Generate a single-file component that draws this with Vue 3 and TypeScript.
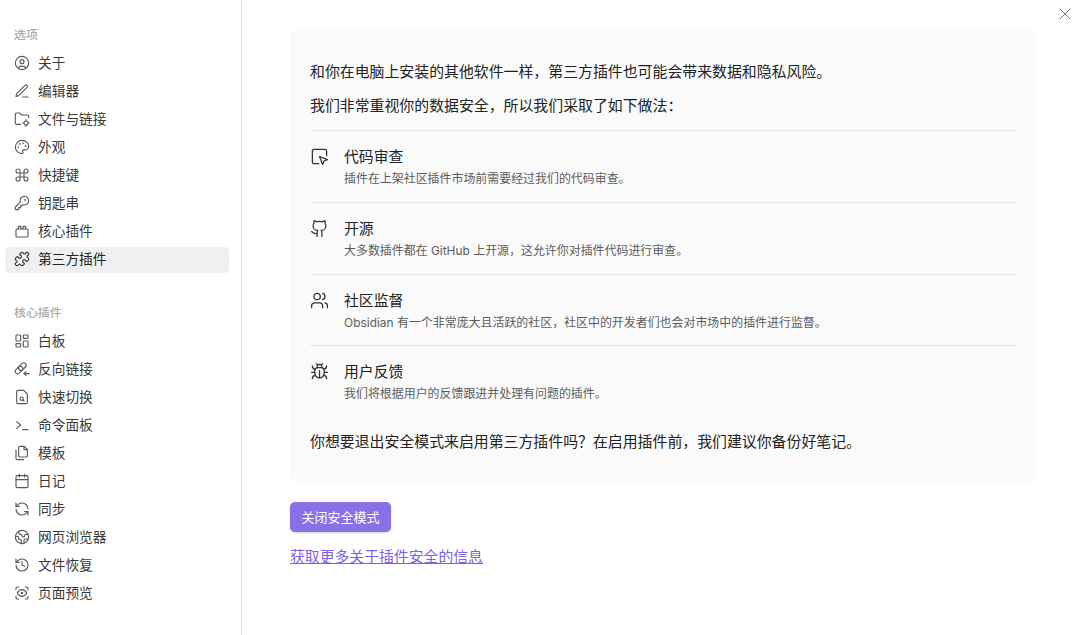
<script setup lang="ts">
interface NavItem { label: string; icon: string; active?: boolean }
interface NavSection { title: string; items: NavItem[] }
interface Measure { title: string; desc: string; icon: string }

const p = (d: string) => `<path d="${d}"/>`
const c = (x: number, y: number, r: number) => `<circle cx="${x}" cy="${y}" r="${r}"/>`
const r = (x: number, y: number, w: number, h: number, rx = 1) => `<rect x="${x}" y="${y}" width="${w}" height="${h}" rx="${rx}"/>`
const link = (cx: number, cy: number) => `<rect x="${cx - 6.5}" y="${cy - 3.6}" width="13" height="7.2" rx="3.6" transform="rotate(-45 ${cx} ${cy})"/>`

const sections: NavSection[] = [
  {
    title: '选项',
    items: [
      { label: '关于', icon: c(12, 12, 10) + c(12, 10, 3) + p('M7 20.662V19a2 2 0 0 1 2-2h6a2 2 0 0 1 2 2v1.662') },
      { label: '编辑器', icon: p('M13 21h8') + p('M16.5 3.5a2.12 2.12 0 0 1 3 3L7 19l-4 1 1-4Z') },
      { label: '文件与链接', icon: p('M10 20H4a2 2 0 0 1-2-2V5a2 2 0 0 1 2-2h3.93a2 2 0 0 1 1.66.9l.82 1.2a2 2 0 0 0 1.66.9H20a2 2 0 0 1 2 2v2') + c(18, 18, 3) + p('M18 13v1.5M18 21.5V23M13 18h1.5M21.5 18H23') },
      { label: '外观', icon: c(13.5, 6.5, 0.5) + c(17.5, 10.5, 0.5) + c(8.5, 7.5, 0.5) + c(6.5, 12.5, 0.5) + p('M12 2C6.5 2 2 6.5 2 12s4.5 10 10 10c.926 0 1.648-.746 1.648-1.688 0-.437-.18-.835-.437-1.125-.29-.289-.438-.652-.438-1.125a1.64 1.64 0 0 1 1.668-1.668h1.996c3.051 0 5.555-2.503 5.555-5.554C21.965 6.012 17.461 2 12 2z') },
      { label: '快捷键', icon: p('M15 6v12a3 3 0 1 0 3-3H6a3 3 0 1 0 3 3V6a3 3 0 1 0-3 3h12a3 3 0 1 0-3-3') },
      { label: '钥匙串', icon: p('M2 18v3c0 .6.4 1 1 1h4v-3h3v-3h2l1.4-1.4a6.5 6.5 0 1 0-4-4Z') + c(16.5, 7.5, 0.5) },
      { label: '核心插件', icon: r(3, 9, 18, 12, 1.5) + p('M6.5 9V6a1 1 0 0 1 1-1h2a1 1 0 0 1 1 1v3M13.5 9V6a1 1 0 0 1 1-1h2a1 1 0 0 1 1 1v3') },
      { label: '第三方插件', active: true, icon: p('M19.439 7.85c-.049.322.059.648.289.878l1.568 1.568c.47.47.706 1.087.706 1.704s-.235 1.233-.706 1.704l-1.611 1.611a.98.98 0 0 1-.837.276c-.47-.07-.802-.48-.968-.925a2.501 2.501 0 1 0-3.214 3.214c.446.166.855.497.925.968a.979.979 0 0 1-.276.837l-1.61 1.61a2.404 2.404 0 0 1-1.705.707 2.402 2.402 0 0 1-1.704-.706l-1.568-1.568a1.026 1.026 0 0 0-.877-.29c-.493.074-.84.504-1.02.968a2.5 2.5 0 1 1-3.237-3.237c.464-.18.894-.527.967-1.02a1.026 1.026 0 0 0-.289-.877l-1.568-1.568A2.402 2.402 0 0 1 1.998 12c0-.617.236-1.234.706-1.704L4.23 8.77c.24-.24.581-.353.917-.303.515.077.877.528 1.073 1.01a2.5 2.5 0 1 0 3.259-3.259c-.482-.196-.933-.558-1.01-1.073-.05-.336.062-.676.303-.917l1.525-1.525A2.402 2.402 0 0 1 12 1.998c.617 0 1.234.236 1.704.706l1.568 1.568c.23.23.556.338.877.29.493-.074.84-.504 1.02-.968a2.5 2.5 0 1 1 3.237 3.237c-.464.18-.894.527-.967 1.02Z') },
    ],
  },
  {
    title: '核心插件',
    items: [
      { label: '白板', icon: r(3, 3, 7, 9) + r(14, 3, 7, 5) + r(14, 12, 7, 9) + r(3, 16, 7, 5) },
      { label: '反向链接', icon: link(7.5, 13.5) + link(12.5, 8.5) + p('M23 19h-8') + p('M18 16l-3 3 3 3') },
      { label: '快速切换', icon: p('M14.5 2H6a2 2 0 0 0-2 2v16a2 2 0 0 0 2 2h12a2 2 0 0 0 2-2V7.5L14.5 2z') + c(11.5, 14.5, 2.5) + p('M13.3 16.3 15 18') },
      { label: '命令面板', icon: p('M4 17l6-5-6-5') + p('M13 19h8') },
      { label: '模板', icon: p('M15.5 2H8.6c-.4 0-.8.2-1.1.5-.3.3-.5.7-.5 1.1v12.8c0 .4.2.8.5 1.1.3.3.7.5 1.1.5h9.8c.4 0 .8-.2 1.1-.5.3-.3.5-.7.5-1.1V6.5L15.5 2z') + p('M3 7.6v12.8c0 .4.2.8.5 1.1.3.3.7.5 1.1.5h9.8') + p('M15 2v5h5') },
      { label: '日记', icon: r(3, 4, 18, 18, 2) + p('M16 2v4M8 2v4M3 10h18') },
      { label: '同步', icon: p('M21 12a9 9 0 0 0-9-9 9.75 9.75 0 0 0-6.74 2.74L3 8') + p('M3 3v5h5') + p('M3 12a9 9 0 0 0 9 9 9.75 9.75 0 0 0 6.74-2.74L21 16') + p('M16 16h5v5') },
      { label: '网页浏览器', icon: c(12, 12, 10) + p('M21.54 15H17a2 2 0 0 0-2 2v4.54') + p('M7 3.34V5a3 3 0 0 0 3 3a2 2 0 0 1 2 2c0 1.1.9 2 2 2a2 2 0 0 0 2-2c0-1.1.9-2 2-2h3.17') + p('M11 21.95V18a2 2 0 0 0-2-2a2 2 0 0 1-2-2v-1a2 2 0 0 0-2-2H2.05') },
      { label: '文件恢复', icon: p('M3 12a9 9 0 1 0 9-9 9.75 9.75 0 0 0-6.74 2.74L3 8') + p('M3 3v5h5') + p('M12 7v5l4 2') },
      { label: '页面预览', icon: p('M3 7V5a2 2 0 0 1 2-2h2') + p('M17 3h2a2 2 0 0 1 2 2v2') + p('M21 17v2a2 2 0 0 1-2 2h-2') + p('M7 21H5a2 2 0 0 1-2-2v-2') + c(12, 12, 1) + p('M5 12s2.5-5 7-5 7 5 7 5-2.5 5-7 5-7-5-7-5') },
    ],
  },
]

const measures: Measure[] = [
  { title: '代码审查', desc: '插件在上架社区插件市场前需要经过我们的代码审查。', icon: p('M21 11V5a2 2 0 0 0-2-2H5a2 2 0 0 0-2 2v14a2 2 0 0 0 2 2h6') + p('m12 12 4 10 1.7-4.3L22 16Z') },
  { title: '开源', desc: '大多数插件都在 GitHub 上开源\uFF0C这允许你对插件代码进行审查。', icon: p('M15 22v-4a4.8 4.8 0 0 0-1-3.5c3 0 6-2 6-5.5.08-1.25-.27-2.48-1-3.5.28-1.15.28-2.35 0-3.5 0 0-1 0-3 1.5-2.64-.5-5.36-.5-8 0C6 2 5 2 5 2c-.3 1.15-.3 2.35 0 3.5A5.403 5.403 0 0 0 4 9c0 3.5 3 5.5 6 5.5-.39.49-.68 1.05-.85 1.65-.17.6-.22 1.23-.15 1.85v4') + p('M9 18c-4.51 2-5-2-7-2') },
  { title: '社区监督', desc: 'Obsidian 有一个非常庞大且活跃的社区\uFF0C社区中的开发者们也会对市场中的插件进行监督。', icon: p('M16 21v-2a4 4 0 0 0-4-4H6a4 4 0 0 0-4 4v2') + c(9, 7, 4) + p('M22 21v-2a4 4 0 0 0-3-3.87') + p('M16 3.13a4 4 0 0 1 0 7.75') },
  { title: '用户反馈', desc: '我们将根据用户的反馈跟进并处理有问题的插件。', icon: p('M8 2l1.88 1.88') + p('M14.12 3.88 16 2') + p('M9 7.13v-1a3.003 3.003 0 1 1 6 0v1') + p('M12 20c-3.3 0-6-2.7-6-6v-3a4 4 0 0 1 4-4h4a4 4 0 0 1 4 4v3c0 3.3-2.7 6-6 6') + p('M12 20v-9') + p('M6.53 9C4.6 8.8 3 7.1 3 5') + p('M6 13H2') + p('M3 21c0-2.1 1.7-3.9 3.8-4') + p('M20.97 5c0 2.1-1.6 3.8-3.5 4') + p('M22 13h-4') + p('M17.2 17c2.1.1 3.8 1.9 3.8 4') },
]
</script>

<template>
  <div class="modal">
    <aside class="sidebar">
      <section v-for="section in sections" :key="section.title" class="nav-section">
        <h2 class="nav-title">{{ section.title }}</h2>
        <ul class="nav-list">
          <li v-for="item in section.items" :key="item.label" class="nav-item" :class="{ active: item.active }">
            <svg class="nav-icon" viewBox="0 0 24 24" v-html="item.icon"></svg>
            <span class="nav-label">{{ item.label }}</span>
          </li>
        </ul>
      </section>
    </aside>
    <main class="content">
      <button class="close" aria-label="关闭">
        <svg viewBox="0 0 24 24"><path d="M3 3l18 18M21 3 3 21" /></svg>
      </button>
      <div class="card">
        <p class="lead">和你在电脑上安装的其他软件一样&#xFF0C;第三方插件也可能会带来数据和隐私风险。</p>
        <p class="lead second">我们非常重视你的数据安全&#xFF0C;所以我们采取了如下做法&#xFF1A;</p>
        <ul class="measures">
          <li v-for="m in measures" :key="m.title" class="measure">
            <svg class="measure-icon" viewBox="0 0 24 24" v-html="m.icon"></svg>
            <div>
              <div class="measure-title">{{ m.title }}</div>
              <div class="measure-desc">{{ m.desc }}</div>
            </div>
          </li>
        </ul>
        <p class="lead closing">你想要退出安全模式来启用第三方插件吗&#xFF1F;在启用插件前&#xFF0C;我们建议你备份好笔记。</p>
      </div>
      <button class="cta"><span>关闭安全模式</span></button>
      <a class="more" href="#">获取更多关于插件安全的信息</a>
    </main>
  </div>
</template>

<style scoped>
.modal {
  display: flex;
  width: 1080px;
  height: 635px;
  overflow: hidden;
  background: #fff;
  color: #222;
  font-family: Inter, "Noto Sans CJK SC", sans-serif;
}
.sidebar {
  flex: none;
  width: 242px;
  box-sizing: border-box;
  padding: 27px 12px 0 5px;
  border-right: 1px solid #e3e3e3;
  background: #fff;
}
.nav-section + .nav-section {
  margin-top: 32px;
}
.nav-title {
  margin: 0 0 8px 9px;
  font-size: 11.9px;
  line-height: 16px;
  font-weight: 500;
  color: #ababab;
}
.nav-list {
  display: flex;
  flex-direction: column;
  gap: 2px;
  margin: 0;
  padding: 0;
  list-style: none;
}
.nav-item {
  display: flex;
  align-items: center;
  gap: 8px;
  height: 26px;
  box-sizing: border-box;
  padding: 0 0 2px 9px;
  border-radius: 4px;
  font-size: 13.7px;
  color: #3a3a3a;
}
.nav-label {
  margin-bottom: 2px;
}
.nav-item.active {
  background: #f0f0f0;
  color: #222;
}
.nav-icon {
  width: 16px;
  height: 16px;
  flex: none;
  fill: none;
  stroke: #5a5a5a;
  stroke-width: 1.7;
  stroke-linecap: round;
  stroke-linejoin: round;
}
.nav-item.active .nav-icon {
  stroke: #333;
}
.content {
  position: relative;
  flex: 1;
  display: flex;
  flex-direction: column;
  align-items: flex-start;
  padding: 27px 44px 0 48px;
}
.close {
  position: absolute;
  top: 6.5px;
  right: 8px;
  width: 14px;
  height: 14px;
  padding: 0;
  border: none;
  background: none;
}
.close svg {
  display: block;
  width: 14px;
  height: 14px;
  fill: none;
  stroke: #7a7a7a;
  stroke-width: 1.7;
}
.card {
  align-self: stretch;
  height: 458px;
  box-sizing: border-box;
  padding: 33px 19.5px 0 20px;
  border-radius: 12px;
  background: #fafafa;
}
.lead {
  margin: 0;
  font-size: 14.9px;
  line-height: 24px;
  color: #222;
}
.second {
  margin-top: 10px;
}
.measures {
  margin: 12.3px 0 0;
  padding: 0;
  list-style: none;
}
.measure {
  display: flex;
  gap: 15px;
  height: 71.7px;
  box-sizing: border-box;
  padding-top: 16px;
  border-top: 1px solid #e6e6e6;
}
.measure-icon {
  width: 19px;
  height: 19px;
  flex: none;
  fill: none;
  stroke: #333;
  stroke-width: 1.6;
  stroke-linecap: round;
  stroke-linejoin: round;
}
.measure-title {
  font-size: 14.85px;
  line-height: 20px;
  color: #222;
}
.measure-desc {
  margin-top: 4px;
  font-size: 11.95px;
  line-height: 16px;
  color: #5c5c5c;
}
.closing {
  margin-top: 13px;
}
.cta {
  width: 101px;
  height: 30px;
  margin-top: 17px;
  padding: 0 0 2px;
  border: none;
  border-radius: 5px;
  background: #8a70e6;
  box-shadow: 0 1px 2px rgba(0, 0, 0, 0.18);
  color: #fff;
  font: inherit;
  font-size: 13px;
}
.more {
  margin-top: 13px;
  font-size: 14.85px;
  line-height: 24px;
  color: #7f5fe6;
  text-decoration: underline;
}
</style>
